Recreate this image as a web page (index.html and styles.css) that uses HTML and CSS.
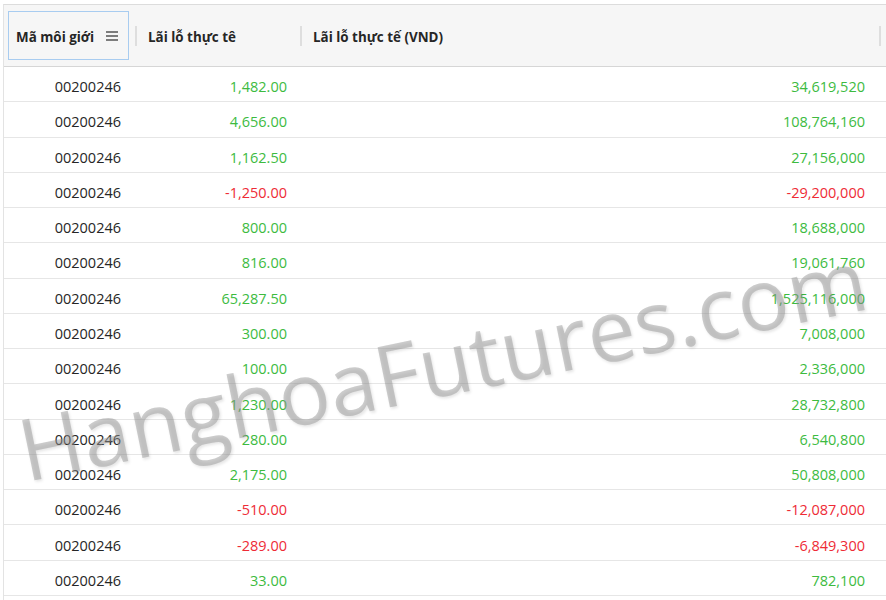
FILE: index.html
```html
<!DOCTYPE html>
<html lang="vi">
<head>
  <meta charset="UTF-8" />
  <meta name="viewport" content="width=device-width, initial-scale=1.0"/>
  <title>Lãi lỗ thực tế</title>
  <link rel="stylesheet" href="styles.css">
</head>
<body>
  <div class="grid">
    <div class="head">
      <div class="hcell c1">
        <div class="focus">
          <span class="htext">Mã môi giới</span>
          <svg class="menu" width="12" height="10" viewBox="0 0 12 10">
            <path d="M0 1h12M0 5h12M0 9h12" stroke="#555" stroke-width="1.4" fill="none"/>
          </svg>
        </div>
      </div>
      <div class="hcell c2"><span class="sep"></span><span class="htext">Lãi lỗ thực tê</span></div>
      <div class="hcell c3"><span class="sep"></span><span class="htext">Lãi lỗ thực tế (VND)</span></div>
      <div class="hcell c4"><span class="sep"></span></div>
    </div>

    <div class="row"><div class="cell c1">00200246</div><div class="cell c2 up">1,482.00</div><div class="cell c3 up">34,619,520</div><div class="cell c4"></div></div>
    <div class="row"><div class="cell c1">00200246</div><div class="cell c2 up">4,656.00</div><div class="cell c3 up">108,764,160</div><div class="cell c4"></div></div>
    <div class="row"><div class="cell c1">00200246</div><div class="cell c2 up">1,162.50</div><div class="cell c3 up">27,156,000</div><div class="cell c4"></div></div>
    <div class="row"><div class="cell c1">00200246</div><div class="cell c2 down">-1,250.00</div><div class="cell c3 down">-29,200,000</div><div class="cell c4"></div></div>
    <div class="row"><div class="cell c1">00200246</div><div class="cell c2 up">800.00</div><div class="cell c3 up">18,688,000</div><div class="cell c4"></div></div>
    <div class="row"><div class="cell c1">00200246</div><div class="cell c2 up">816.00</div><div class="cell c3 up">19,061,760</div><div class="cell c4"></div></div>
    <div class="row"><div class="cell c1">00200246</div><div class="cell c2 up">65,287.50</div><div class="cell c3 up">1,525,116,000</div><div class="cell c4"></div></div>
    <div class="row"><div class="cell c1">00200246</div><div class="cell c2 up">300.00</div><div class="cell c3 up">7,008,000</div><div class="cell c4"></div></div>
    <div class="row"><div class="cell c1">00200246</div><div class="cell c2 up">100.00</div><div class="cell c3 up">2,336,000</div><div class="cell c4"></div></div>
    <div class="row"><div class="cell c1">00200246</div><div class="cell c2 up">1,230.00</div><div class="cell c3 up">28,732,800</div><div class="cell c4"></div></div>
    <div class="row"><div class="cell c1">00200246</div><div class="cell c2 up">280.00</div><div class="cell c3 up">6,540,800</div><div class="cell c4"></div></div>
    <div class="row"><div class="cell c1">00200246</div><div class="cell c2 up">2,175.00</div><div class="cell c3 up">50,808,000</div><div class="cell c4"></div></div>
    <div class="row"><div class="cell c1">00200246</div><div class="cell c2 down">-510.00</div><div class="cell c3 down">-12,087,000</div><div class="cell c4"></div></div>
    <div class="row"><div class="cell c1">00200246</div><div class="cell c2 down">-289.00</div><div class="cell c3 down">-6,849,300</div><div class="cell c4"></div></div>
    <div class="row"><div class="cell c1">00200246</div><div class="cell c2 up">33.00</div><div class="cell c3 up">782,100</div><div class="cell c4"></div></div>
    <div class="row"><div class="cell c1"></div><div class="cell c2"></div><div class="cell c3"></div><div class="cell c4"></div></div>
  </div>

  <div class="watermark">HanghoaFutures.com</div>
</body>
</html>
```

FILE: styles.css
```css
html, body {
  margin: 0;
  overflow: hidden;
  background: #fff;
}

body {
  font-family: "Open Sans", "Noto Sans", sans-serif;
  color: #262626;
  position: relative;
  height: 600px;
}

.grid {
  margin: 4px 0 0 3px;
  width: 980px;
  border-top: 1px solid #dcdcdc;
  border-left: 1px solid #e3e3e3;
}

.head {
  display: flex;
  height: 62px;
  box-sizing: border-box;
  background: #f6f6f6;
  border-bottom: 1px solid #d6d6d6;
}

.c1 { width: 131px; }
.c2 { width: 165px; }
.c3 { width: 579px; }
.c4 { flex: 1; }

.hcell {
  display: flex;
  align-items: center;
  box-sizing: border-box;
  font-size: 13.4px;
  font-weight: 700;
}

.hcell.c1 {
  padding: 6px 6px 6px 4px;
  align-items: stretch;
}

.focus {
  flex: 1;
  display: flex;
  align-items: center;
  justify-content: space-between;
  border: 1px solid #a8ccf0;
  padding: 1px 10px 0 7px;
}

.menu {
  display: block;
}

.sep {
  width: 2px;
  height: 20px;
  background: #dedede;
  margin-right: 11px;
}

.htext {
  padding-top: 2px;
}

.row {
  display: flex;
  height: 35.27px;
  box-sizing: border-box;
  border-bottom: 1px solid #e6e6e6;
  font-size: 14.5px;
}

.cell {
  display: flex;
  align-items: center;
  justify-content: flex-end;
  box-sizing: border-box;
  padding-top: 5px;
}

.cell.c1 { padding-right: 14px; }
.cell.c2 { padding-right: 13px; }
.cell.c3 { padding-right: 14px; }

.up { color: #3dbb3f; }
.down { color: #ee2b36; }

.watermark {
  position: absolute;
  left: 26px;
  top: 406px;
  font-size: 86px;
  line-height: 1;
  white-space: nowrap;
  color: rgba(150, 150, 150, 0.48);
  text-shadow: 1px 2px 3px rgba(0, 0, 0, 0.1);
  transform-origin: 0 75px;
  transform: rotate(-11.6deg);
  pointer-events: none;
}
```
